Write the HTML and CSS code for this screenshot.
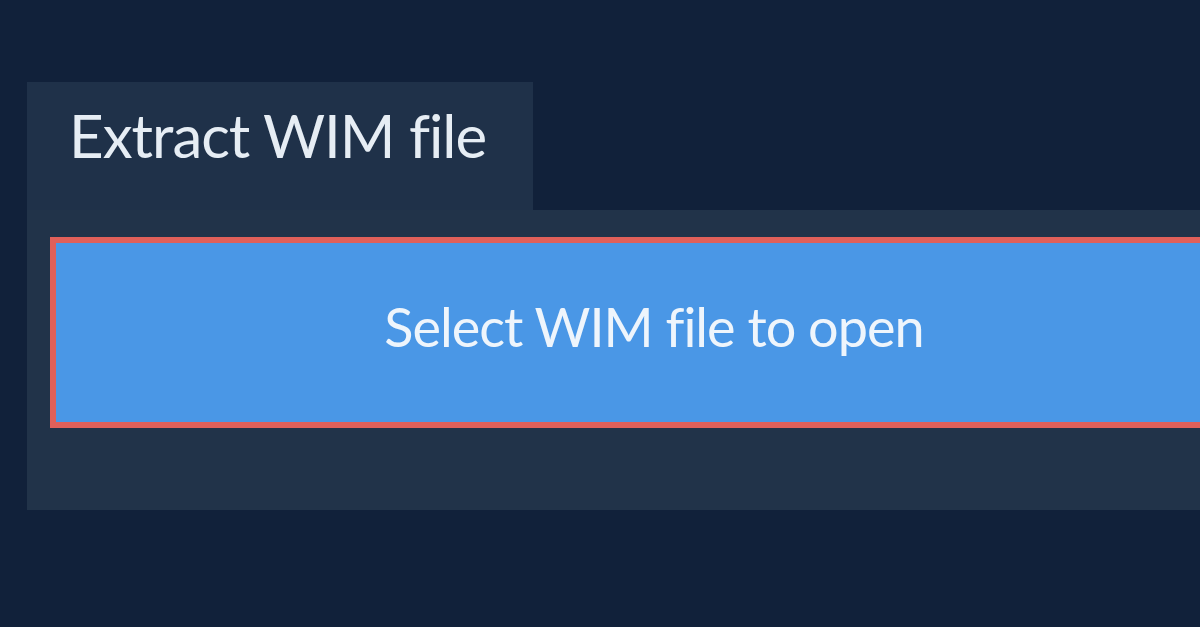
FILE: index.html
```html
<!DOCTYPE html>
<html>
<head>
<meta charset="utf-8">
<link rel="stylesheet" href="styles.css">
</head>
<body>
<div class="page">
  <div class="tabs">
    <div class="tab">Extract WIM file</div>
  </div>
  <div class="panel">
    <button class="select-btn">Select WIM file to open</button>
  </div>
</div>
</body>
</html>
```
FILE: styles.css
```css
html, body {
  margin: 0;
  padding: 0;
  width: 1200px;
  height: 627px;
  overflow: hidden;
  background: #11213a;
  font-family: Lato, "Open Sans", sans-serif;
}
.page {
  padding: 82px 0 0 27px;
}
.tabs {
  display: flex;
}
.tab {
  width: 506px;
  height: 128px;
  box-sizing: border-box;
  background: #1f3149;
  color: #e6edf4;
  font-size: 60px;
  font-weight: 400;
  letter-spacing: -1px;
  padding: 21px 0 0 42px;
  line-height: 64px;
}
.panel {
  background: #213349;
  height: 300px;
  box-sizing: border-box;
  padding: 27px 0 0 23px;
}
.select-btn {
  display: flex;
  align-items: center;
  justify-content: center;
  width: 100%;
  height: 191px;
  box-sizing: border-box;
  border: 6px solid #e0605a;
  border-right: 0;
  background: #4a97e6;
  color: #eef5fc;
  font-family: Lato, "Open Sans", sans-serif;
  font-size: 54px;
  font-weight: 400;
  letter-spacing: -1px;
  padding: 0 0 12px 52px;
  margin: 0;
}
```
